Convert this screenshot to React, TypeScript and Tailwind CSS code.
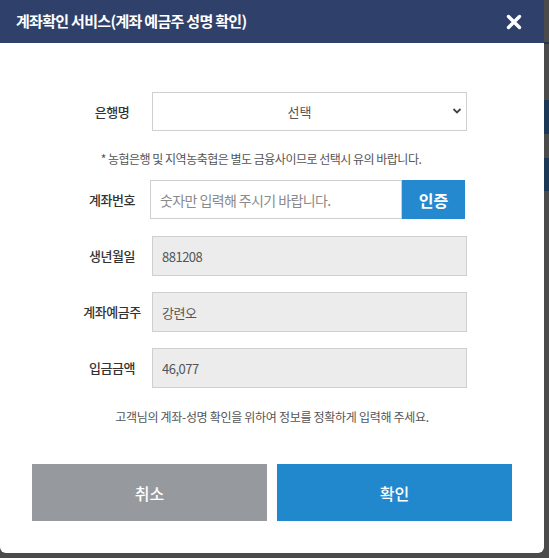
import React from "react";

const font = { fontFamily: '"Noto Sans CJK KR", "Noto Sans", sans-serif' };

const Field = ({ label, value, className }: { label: string; value: string; className: string }) => (
  <div className={`flex items-center ${className}`}>
    <span className="w-[72px] text-center text-[13px] font-medium text-[#333] tracking-[-0.5px]">{label}</span>
    <input
      readOnly
      value={value}
      className="ml-[4px] h-[40px] w-[315px] border border-[#cfcfcf] bg-[#ececec] px-[9px] text-[13px] text-[#555] outline-none tracking-[-0.5px]"
    />
  </div>
);

export default function App() {
  return (
    <div className="flex h-[558px] w-[549px] bg-[#4b4b4b]" style={font}>
      <div className="flex h-[553px] w-[544px] flex-col rounded-b-md bg-white">
        {/* header */}
        <div className="flex h-[43px] shrink-0 items-center justify-between bg-[#2f416b] pl-[16px] pr-[22px]">
          <h1 className="text-[15px] font-bold tracking-[-0.7px] text-white">계좌확인 서비스(계좌 예금주 성명 확인)</h1>
          <svg width="16" height="16" viewBox="0 0 16 16">
            <path d="M2.5 2.5 L13.5 13.5 M13.5 2.5 L2.5 13.5" stroke="white" strokeWidth="3.4" strokeLinecap="round" />
          </svg>
        </div>

        {/* form */}
        <div className="flex flex-col pl-[76px] pt-[49px]">
          <div className="flex items-center">
            <span className="w-[72px] text-center text-[13px] font-medium text-[#333] tracking-[-0.5px]">은행명</span>
            <div className="relative ml-[4px] w-[315px]">
              <select className="h-[39px] w-full appearance-none border border-[#cfcfcf] bg-white pr-[20px] text-center text-[13px] text-[#555] outline-none">
                <option>선택</option>
              </select>
              <svg className="pointer-events-none absolute right-[5px] top-[15px]" width="10" height="8" viewBox="0 0 10 8">
                <path d="M1.5 2 L5 5.5 L8.5 2" stroke="#444" strokeWidth="1.8" fill="none" />
              </svg>
            </div>
          </div>

          <p className="mt-[19px] -ml-[98px] text-center text-[12px] leading-[18px] text-[#555] tracking-[-0.5px]">
            * 농협은행 및 지역농축협은 별도 금융사이므로 선택시 유의 바랍니다.
          </p>

          <div className="mt-[12px] flex items-center">
            <span className="w-[72px] text-center text-[13px] font-medium text-[#333] tracking-[-0.5px]">계좌번호</span>
            <input
              placeholder="숫자만 입력해 주시기 바랍니다."
              className="ml-[2px] h-[39px] w-[252px] border border-[#cfcfcf] bg-white px-[9px] text-[14px] text-[#555] outline-none placeholder:text-[#8a8a8a] tracking-[-0.6px]"
            />
            <button className="h-[39px] w-[63px] bg-[#2589d0] text-[16px] font-bold text-white">인증</button>
          </div>

          <Field label="생년월일" value="881208" className="mt-[17px]" />
          <Field label="계좌예금주" value="강련오" className="mt-[16px]" />
          <Field label="입금금액" value="46,077" className="mt-[16px]" />
        </div>

        <p className="mt-[20px] text-center text-[12px] leading-[18px] text-[#555] tracking-[-0.3px]">
          고객님의 계좌-성명 확인을 위하여 정보를 정확하게 입력해 주세요.
        </p>

        <div className="mt-[38px] flex gap-[10px] px-[32px]">
          <button className="h-[57px] flex-1 bg-[#969a9e] text-[16px] font-medium text-white">취소</button>
          <button className="h-[57px] flex-1 bg-[#2288cd] text-[16px] font-medium text-white">확인</button>
        </div>
      </div>

      {/* backdrop edge */}
      <div className="flex flex-1 flex-col">
        <div className="mt-[42px] h-[2px] bg-[#1f3550]" />
        <div className="mt-[56px] h-[34px] bg-[#1c3a58]" />
        <div className="mt-[24px] h-[33px] bg-[#1c3a58]" />
      </div>
    </div>
  );
}
